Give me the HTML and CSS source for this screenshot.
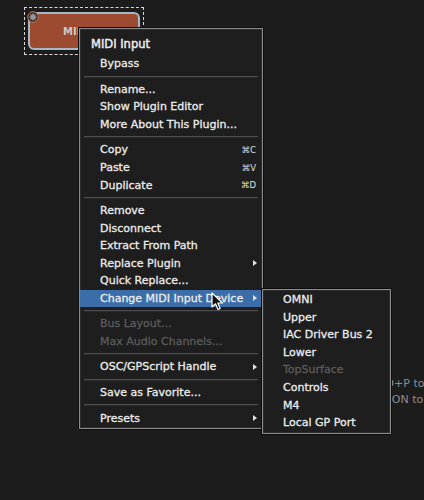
FILE: index.html
```html
<!DOCTYPE html>
<html lang="en">
<head>
<meta charset="UTF-8">
<title>Plugin menu</title>
<link rel="stylesheet" href="styles.css">
</head>
<body>
  <div class="canvas">
    <div class="hint">
      <div>Press CMD+P to</div>
      <div class="hint-second">BUTTON to zoom</div>
    </div>

    <div class="plugin">
      <div class="plugin-body">MIDI Input</div>
      <div class="plugin-close">
        <svg width="12" height="12" viewBox="0 0 12 12">
          <circle cx="6" cy="6" r="5.3" fill="#2a2a2a" stroke="#c9745a" stroke-width="1"/>
          <circle cx="6" cy="6" r="2.6" fill="#9a9a9a"/>
          <path d="M6 2.2v7.6M2.2 6h7.6M3.3 3.3l5.4 5.4M8.7 3.3l-5.4 5.4" stroke="#9a9a9a" stroke-width="1.1"/>
        </svg>
      </div>
    </div>

    <div class="menu main-menu">
      <div class="item header">MIDI Input</div>
      <div class="item">Bypass</div>
      <div class="sep"></div>
      <div class="item">Rename...</div>
      <div class="item">Show Plugin Editor</div>
      <div class="item">More About This Plugin...</div>
      <div class="sep"></div>
      <div class="item">Copy <span class="key">⌘C</span></div>
      <div class="item">Paste <span class="key">⌘V</span></div>
      <div class="item">Duplicate <span class="key">⌘D</span></div>
      <div class="sep"></div>
      <div class="item">Remove</div>
      <div class="item">Disconnect</div>
      <div class="item">Extract From Path</div>
      <div class="item">Replace Plugin <span class="arrow"></span></div>
      <div class="item">Quick Replace...</div>
      <div class="item active">Change MIDI Input Device <span class="arrow"></span></div>
      <div class="sep"></div>
      <div class="item disabled">Bus Layout...</div>
      <div class="item disabled">Max Audio Channels...</div>
      <div class="sep"></div>
      <div class="item">OSC/GPScript Handle <span class="arrow"></span></div>
      <div class="sep"></div>
      <div class="item">Save as Favorite...</div>
      <div class="sep"></div>
      <div class="item">Presets <span class="arrow"></span></div>
    </div>

    <div class="menu sub-menu">
      <div class="item">OMNI</div>
      <div class="item">Upper</div>
      <div class="item">IAC Driver Bus 2</div>
      <div class="item">Lower</div>
      <div class="item disabled">TopSurface</div>
      <div class="item">Controls</div>
      <div class="item">M4</div>
      <div class="item">Local GP Port</div>
    </div>

    <svg class="cursor" width="14" height="20" viewBox="0 0 14 20">
      <path d="M1 1 L1 15 L4.5 11.8 L7 17.5 L9.2 16.5 L6.8 11 L11.5 11 Z" fill="#111" stroke="#fff" stroke-width="1.2" stroke-linejoin="round"/>
    </svg>
  </div>
</body>
</html>
```

FILE: styles.css
```css
html, body {
  margin: 0;
  background: #1c1c1c;
}
.canvas {
  position: relative;
  width: 424px;
  height: 500px;
  overflow: hidden;
  font-family: "DejaVu Sans", "Liberation Sans", sans-serif;
  color: #ececec;
}

/* plugin block behind the menu */
.plugin {
  position: absolute;
  left: 24px;
  top: 7px;
  width: 120px;
  height: 48px;
  border: 1px dashed #d8d8d8;
  padding: 4px 3px 4px 3px;
  box-sizing: border-box;
}
.plugin-body {
  height: 100%;
  border: 2px solid #a9b8c6;
  border-radius: 6px;
  background: #9c4a30;
  box-sizing: border-box;
  font-size: 10px;
  font-weight: bold;
  color: #d0c8c4;
  display: flex;
  align-items: center;
  padding-left: 33px;
  white-space: nowrap;
  overflow: hidden;
}
.plugin-close {
  position: absolute;
  left: 2px;
  top: 0;
  width: 12px;
  height: 12px;
}

.hint {
  position: absolute;
  left: 336px;
  top: 376px;
  font-size: 11px;
  color: #8e8e8e;
  line-height: 16px;
  white-space: nowrap;
}
.hint-second {
  padding-left: 27px;
}

/* menus */
.menu {
  position: absolute;
  background: #1e1e1e;
  border: 1px solid #8c8c8c;
  box-shadow: 0 0 0 1px #0c0c0c, inset 0 0 0 1px #2c2c2c;
  display: flex;
  flex-direction: column;
  font-size: 11px;
  -webkit-text-stroke: 0.3px currentColor;
}
.main-menu {
  left: 79px;
  top: 28px;
  width: 182px;
  padding: 4px 0 1px;
}
.sub-menu {
  left: 262px;
  top: 289px;
  width: 127px;
  padding: 1px 0 2px;
}
.item {
  height: 17.55px;
  display: flex;
  align-items: center;
  padding-left: 20px;
  padding-right: 6px;
  white-space: nowrap;
}
.item.header {
  height: 22px;
  padding-left: 11px;
  font-size: 11.5px;
  -webkit-text-stroke: 0.45px currentColor;
}
.item.active {
  background: #3b6ea8;
}
.item.disabled {
  color: #5c5c5c;
}
.sep {
  height: 0;
  margin: 3px 4px;
  border-top: 1px solid #4c4c4c;
  border-bottom: 1px solid #2a2a2a;
}
.key {
  margin-left: auto;
  font-size: 8.5px;
  color: #e0e0e0;
  -webkit-text-stroke: 0;
}
.arrow {
  margin-left: auto;
  width: 0;
  height: 0;
  border-left: 4px solid #e0e0e0;
  border-top: 3px solid transparent;
  border-bottom: 3px solid transparent;
  margin-right: -1px;
}
.cursor {
  position: absolute;
  left: 211px;
  top: 292px;
}
```
